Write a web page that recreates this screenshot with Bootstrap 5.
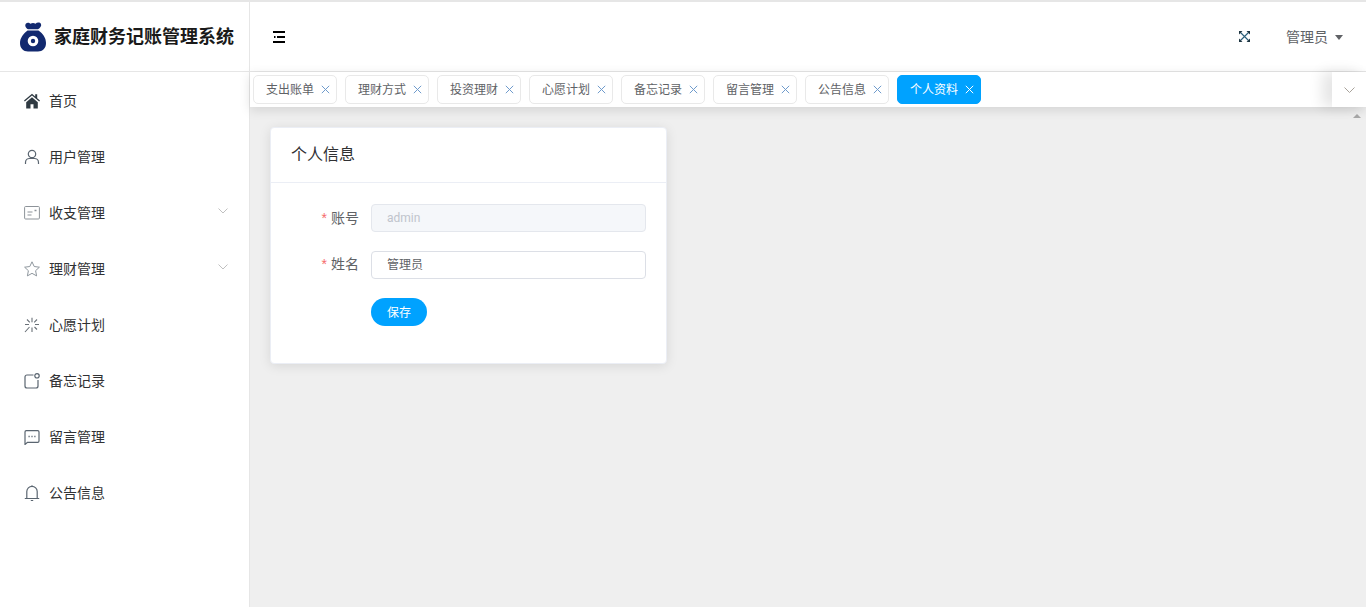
<!DOCTYPE html>
<html lang="zh-CN">
<head>
<meta charset="utf-8">
<title>家庭财务记账管理系统</title>
<link rel="stylesheet" href="https://cdn.jsdelivr.net/npm/bootstrap@5.3.0/dist/css/bootstrap.min.css">
<style>
html,body{height:100%;overflow:hidden}
body{font-family:"Liberation Sans","Noto Sans CJK SC",sans-serif;font-size:14px;color:#303133;background:#fff}
.shell{height:607px;border-top:2px solid #e6e6e6;width:1366px}
.rail{width:250px;flex:none;border-right:1px solid #e6e6e6;background:#fff}
.brand{height:70px;border-bottom:1px solid #e6e6e6;padding-left:20px;gap:8px}
.brand-name{font-size:18px;font-weight:700;color:#1a1a1a;white-space:nowrap;padding-top:2px}
.menu-row{height:56px;padding:0 21px 0 24px;color:#303133;font-size:14px;text-decoration:none}
.menu-ico{width:16px;height:16px;margin-right:9px;flex:none}
.menu-row:first-of-type{margin-top:1px}
.caret-down{width:10px;height:6px;margin-top:-5px}
.stage{min-width:0;background:#efefef}
.topbar{height:70px;background:#fff;border-bottom:1px solid #e6e6e6;padding:0 23px 0 23px;flex:none}
.user-name{color:#606266;font-size:14px;padding-top:2px}
.user-caret{width:0;height:0;border-left:4.5px solid transparent;border-right:4.5px solid transparent;border-top:5px solid #606266;margin-left:7px;margin-top:2px}
.expand-ico{margin-right:36px}
.tabs-bar{height:35px;background:#fff;box-shadow:0 3px 12px rgba(0,0,0,.12);flex:none;position:relative;padding-left:3px;z-index:1}
.tab-chip{height:29px;width:84px;margin-top:3px;border:1px solid #e9e9e9;border-radius:5px;color:#606266;font-size:12px;padding-left:12px;background:#fff;flex:none}
.tab-chip svg{margin-left:7px}
.tab-chip.is-on{background:#00a2ff;border-color:#00a2ff;color:#fff}
.tabs-list{gap:8px}
.tabs-more{width:34px;height:35px;background:#fff;box-shadow:-10px 0 14px rgba(0,0,0,.1)}
.content{padding:20px 0 0 20px;position:relative;flex:1}
.scroll-up{position:absolute;right:5px;top:7px;width:0;height:0;border-left:4px solid transparent;border-right:4px solid transparent;border-bottom:4px solid #a8a8a8}
.info-card{width:397px;height:237px;background:#fff;border-radius:4px;border:1px solid #ebeef5;box-shadow:0 2px 12px rgba(0,0,0,.1)}
.info-head{height:55px;padding-left:20px;font-size:16px;color:#303133;border-bottom:1px solid #ebeef5;flex:none}
.info-body{padding:21px 20px 0 0}
.lbl{width:100px;flex:none;text-align:right;padding-right:12px;color:#606266;font-size:14px}
.lbl i{font-style:normal;color:#f56c6c;margin-right:4px}
.field{width:275px;height:28px;border:1px solid #dcdfe6;border-radius:4px;padding:0 15px 3px;font-size:12px;color:#606266;background:#fff;outline:0}
.field:disabled{background:#f5f7fa;border-color:#e4e7ed;color:#c0c4cc;font-family:Roboto,"Liberation Sans",sans-serif;padding-bottom:0}
.field-row{margin-bottom:19px}
.field-row + .field-row .lbl{padding-bottom:2px}
.save-btn{margin-left:100px;width:56px;height:28px;border:0;border-radius:14px;background:#00a2ff;color:#fff;font-size:12px;padding:1px 0 0}
</style>
</head>
<body>
<div class="shell d-flex">
  <aside class="rail d-flex flex-column">
    <div class="brand d-flex align-items-center">
      <svg width="26" height="30" viewBox="0 0 26 30"><path fill="#12296f" d="M6 1.500C7.500.2 9.500.8 10.500 1.800 12 .8 14 .8 15.500 1.800 17 .2 20 .2 21 2c.8 1.800-.8 4-3 5.200H8C5.500 6 4.500 3.300 6 1.500zM7.500 8.500h11c4.500 3 7.500 7.500 7.500 12.500 0 5.500-3.500 8.500-8 8.500H8c-4.500 0-8-3-8-8.500C0 16 3.500 11.500 7.500 8.500z"/><circle cx="13" cy="19" r="5.300" fill="#fff"/><circle cx="13" cy="19" r="2.200" fill="#12296f"/></svg>
      <span class="brand-name">家庭财务记账管理系统</span>
    </div>
    <nav class="d-flex flex-column">
      <a class="menu-row d-flex align-items-center"><svg class="menu-ico" viewBox="0 0 16 16"><path fill="#2f3a42" d="M8 .8 0 7.500l.8 1L8 2.500l7.200 6 .8-1-2.800-2.300V1.300h-2v2.200zM2.200 9.200V15.500h4.300v-4.300h3v4.300h4.300V9.200L8 4.300z"/></svg>首页</a>
      <a class="menu-row d-flex align-items-center"><svg class="menu-ico" viewBox="0 0 16 16" fill="none" stroke="#5a6570" stroke-width="1.200"><circle cx="8" cy="5" r="3.700"/><path d="M1.500 15v-1.500C1.500 11 3.500 9.500 5.500 9.500h5c2 0 4 1.500 4 4V15"/></svg>用户管理</a>
      <a class="menu-row d-flex align-items-center"><svg class="menu-ico" viewBox="0 0 16 16" fill="none" stroke="#8d9399"><rect x=".6" y="1.500" width="14.800" height="12.500" rx="1"/><path d="M3.500 7h5M3.500 10h4"/><path d="M10.500 5.500h2" stroke-width="1.500"/></svg>收支管理<svg class="caret-down ms-auto" viewBox="0 0 10 6" fill="none" stroke="#c0c0c0"><path d="m.5.500 4.500 4.500L9.500.500"/></svg></a>
      <a class="menu-row d-flex align-items-center"><svg class="menu-ico" viewBox="0 0 16 16" fill="none" stroke="#8f979e"><path d="M8 .8l2.200 4.700 5.200.7-3.800 3.500 1 5.200L8 12.300l-4.600 2.600 1-5.200L.6 6.200l5.200-.7z"/></svg>理财管理<svg class="caret-down ms-auto" viewBox="0 0 10 6" fill="none" stroke="#c0c0c0"><path d="m.5.500 4.500 4.500L9.500.500"/></svg></a>
      <a class="menu-row d-flex align-items-center"><svg class="menu-ico" viewBox="0 0 16 16" fill="none" stroke="#6a7178" stroke-width="1.100"><path d="M8 .8v4.400M8 10.500v4.500M1 7.500h4M11 7.500h4M3 2.500l2.800 2.800M13 2.500l-2.800 2.800M5.500 10 1 15M10.500 10l2.500 2.500"/></svg>心愿计划</a>
      <a class="menu-row d-flex align-items-center"><svg class="menu-ico" viewBox="0 0 16 16" fill="none" stroke="#5a6570" stroke-width="1.200"><path d="M9.500 2H3C1.800 2 1 2.800 1 4v9c0 1.200.8 2 2 2h9c1.200 0 2-.8 2-2V7"/><circle cx="13" cy="2.800" r="2.200"/></svg>备忘记录</a>
      <a class="menu-row d-flex align-items-center"><svg class="menu-ico" viewBox="0 0 16 16" fill="none" stroke="#5a6570" stroke-width="1.200"><path d="M1 15.500V3c0-.8.500-1.300 1.300-1.300h11.400c.8 0 1.300.5 1.300 1.300v9c0 .8-.5 1.300-1.300 1.300H3.500z"/><path d="M4.500 7.500h1.200M7.400 7.500h1.200M10.300 7.500h1.200" stroke-width="1.500"/></svg>留言管理</a>
      <a class="menu-row d-flex align-items-center"><svg class="menu-ico" viewBox="0 0 16 16" fill="none" stroke="#5a6570" stroke-width="1.200"><path d="M.8 13.500h14.400M2.800 13.500V6.500a5.200 5.200 0 0 1 10.400 0v7M6.800 15.500h2.400M8 1.300V.3"/></svg>公告信息</a>
    </nav>
  </aside>
  <main class="stage flex-grow-1 d-flex flex-column">
    <header class="topbar d-flex align-items-center">
      <svg width="12" height="12" viewBox="0 0 12 12"><path stroke="#000" stroke-width="2" d="M0 1h12M4 6h8M0 11h12M1 6h1.500"/></svg>
      <svg class="ms-auto expand-ico" width="11" height="11" viewBox="0 0 11 11"><path fill="none" stroke="#2a5f7a" stroke-width="1.100" d="M1.500 1.500l8 8M9.500 1.500l-8 8"/><path fill="#1c3440" d="M0 0h3.500L0 3.500zM11 0v3.500L7.500 0zM0 11V7.500L3.500 11zM11 11H7.500L11 7.500z"/></svg>
      <span class="user-name">管理员</span><span class="user-caret"></span>
    </header>
    <div class="tabs-bar d-flex">
      <div class="tabs-list d-flex flex-grow-1">
        <div class="tab-chip d-flex align-items-center">支出账单<svg width="9" height="9" viewBox="0 0 9 9" stroke="#6f9bcc"><path d="M.8.800l7.400 7.400M8.200.800.8 8.200"/></svg></div>
        <div class="tab-chip d-flex align-items-center">理财方式<svg width="9" height="9" viewBox="0 0 9 9" stroke="#6f9bcc"><path d="M.8.800l7.400 7.400M8.200.800.8 8.200"/></svg></div>
        <div class="tab-chip d-flex align-items-center">投资理财<svg width="9" height="9" viewBox="0 0 9 9" stroke="#6f9bcc"><path d="M.8.800l7.400 7.400M8.200.800.8 8.200"/></svg></div>
        <div class="tab-chip d-flex align-items-center">心愿计划<svg width="9" height="9" viewBox="0 0 9 9" stroke="#6f9bcc"><path d="M.8.800l7.400 7.400M8.200.800.8 8.200"/></svg></div>
        <div class="tab-chip d-flex align-items-center">备忘记录<svg width="9" height="9" viewBox="0 0 9 9" stroke="#6f9bcc"><path d="M.8.800l7.400 7.400M8.200.800.8 8.200"/></svg></div>
        <div class="tab-chip d-flex align-items-center">留言管理<svg width="9" height="9" viewBox="0 0 9 9" stroke="#6f9bcc"><path d="M.8.800l7.400 7.400M8.200.800.8 8.200"/></svg></div>
        <div class="tab-chip d-flex align-items-center">公告信息<svg width="9" height="9" viewBox="0 0 9 9" stroke="#6f9bcc"><path d="M.8.800l7.400 7.400M8.200.800.8 8.200"/></svg></div>
        <div class="tab-chip is-on d-flex align-items-center">个人资料<svg width="9" height="9" viewBox="0 0 9 9" stroke="#fff"><path d="M.8.800l7.400 7.400M8.200.800.8 8.200"/></svg></div>
      </div>
      <div class="tabs-more d-flex align-items-center justify-content-center"><svg width="11" height="6" viewBox="0 0 11 6" fill="none" stroke="#a8a29a"><path d="m.5.500 5 5 5-5"/></svg></div>
    </div>
    <section class="content">
      <span class="scroll-up"></span>
      <div class="info-card d-flex flex-column">
        <div class="info-head d-flex align-items-center">个人信息</div>
        <form class="info-body">
          <div class="field-row d-flex align-items-center"><label class="lbl"><i>*</i>账号</label><input class="field" disabled value="admin"></div>
          <div class="field-row d-flex align-items-center"><label class="lbl"><i>*</i>姓名</label><input class="field" value="管理员"></div>
          <button type="button" class="save-btn d-block">保存</button>
        </form>
      </div>
    </section>
  </main>
</div>
<script src="https://cdn.jsdelivr.net/npm/bootstrap@5.3.0/dist/js/bootstrap.bundle.min.js"></script>
</body>
</html>
